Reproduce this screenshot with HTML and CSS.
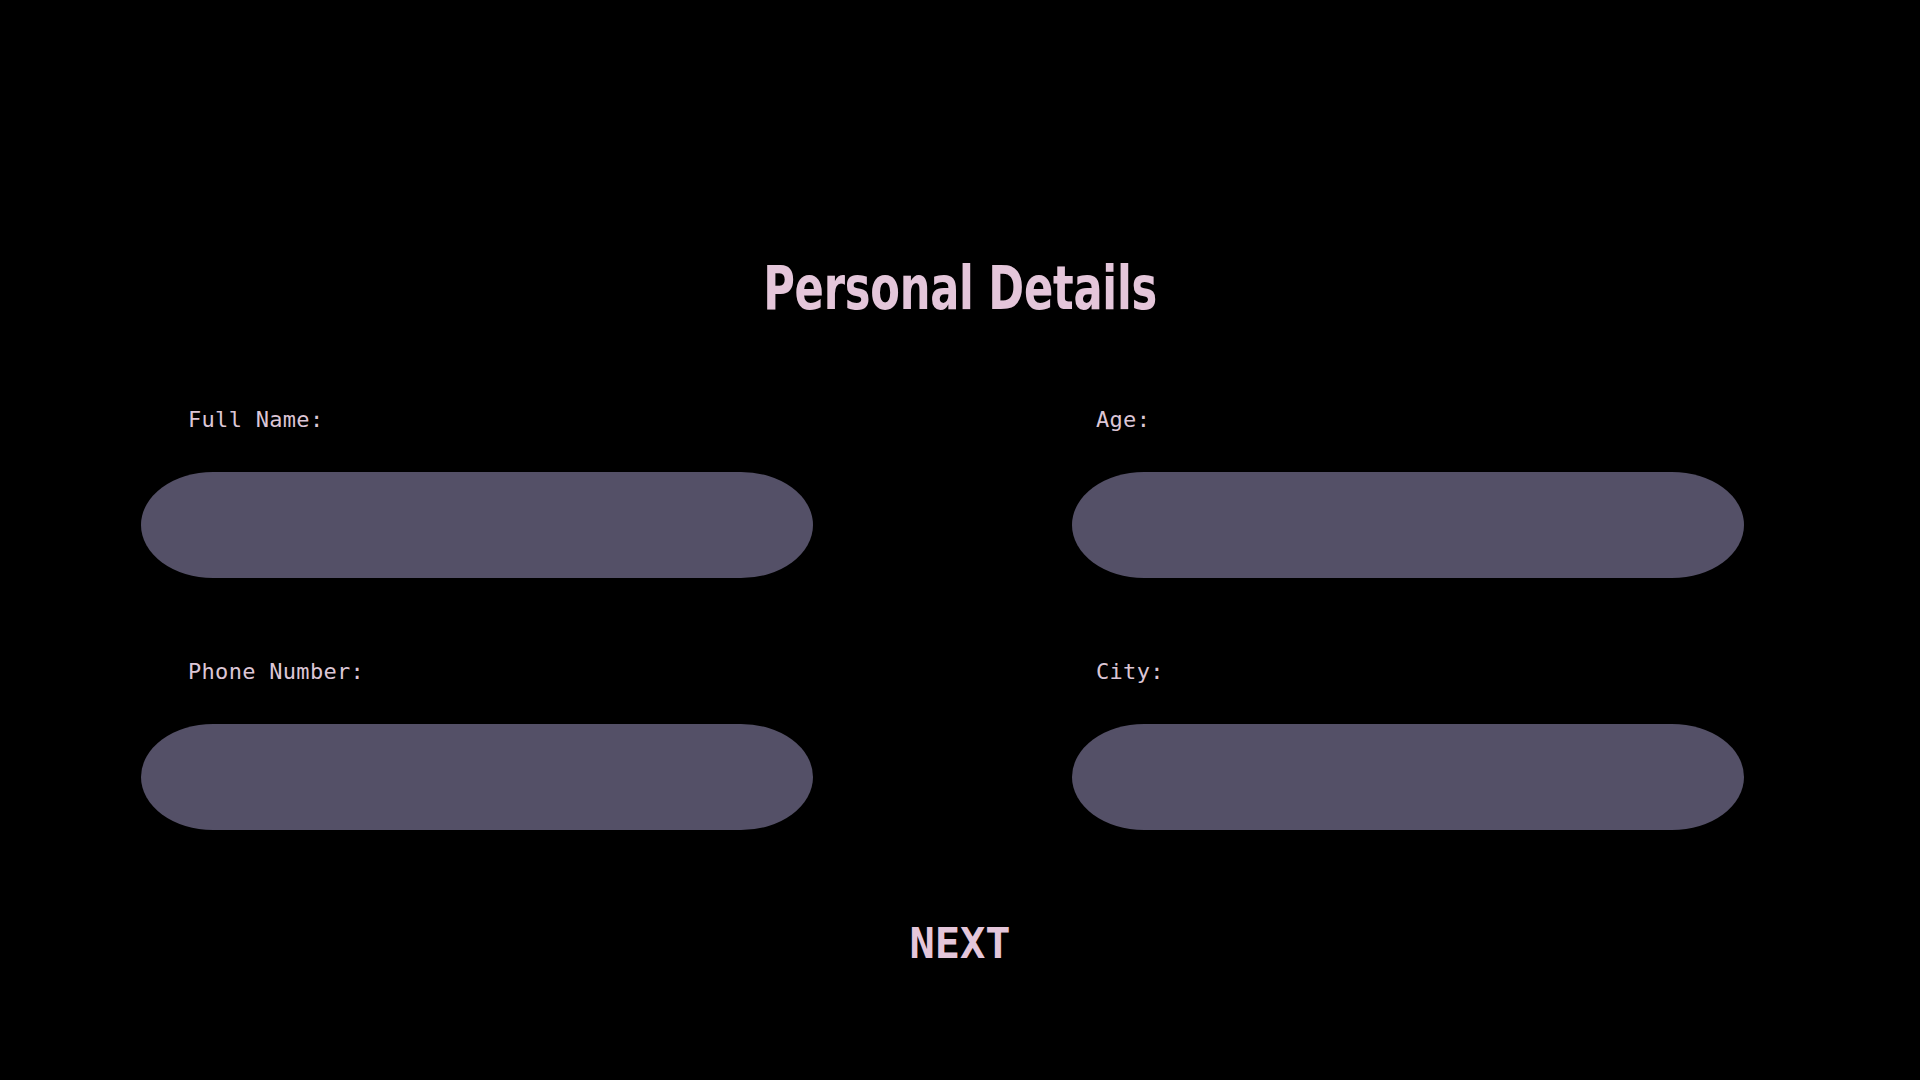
FILE: index.html
```html
<!DOCTYPE html>
<html lang="en">
<head>
  <meta charset="UTF-8">
  <title>Personal Details</title>
  <link rel="stylesheet" href="styles.css">
</head>
<body>

<div class="page">
  <h1 class="title"><span>Personal Details</span></h1>

  <form class="fields">
    <div class="field left">
      <label for="fullName">Full Name:</label>
      <input type="text" id="fullName">
    </div>
    <div class="field right">
      <label for="age">Age:</label>
      <input type="text" id="age">
    </div>
    <div class="field left">
      <label for="phone">Phone Number:</label>
      <input type="text" id="phone">
    </div>
    <div class="field right">
      <label for="city">City:</label>
      <input type="text" id="city">
    </div>
  </form>

  <button class="next" type="button">NEXT</button>
</div>

</body>
</html>
```

FILE: styles.css
```css
* { box-sizing: border-box; }
html, body { margin: 0; padding: 0; background: #000; }
body { width: 1920px; height: 1080px; overflow: hidden; }
.page { display: flex; flex-direction: column; padding-top: 258px; }
.title {
  margin: 0;
  text-align: center;
  font-family: "Liberation Sans Narrow", "DejaVu Sans Condensed", "Liberation Sans", sans-serif;
  font-weight: bold;
  font-size: 60px;
  line-height: 60px;
  color: #e4c6da;
}
.title span { display: inline-block; transform: scaleX(0.8); letter-spacing: -0.3px; }
.fields {
  display: grid;
  grid-template-columns: 672px 672px;
  column-gap: 259px;
  row-gap: 81px;
  margin: 89px 0 0 141px;
}
.field { display: flex; flex-direction: column; gap: 41px; }
.field label {
  margin-top: 2px;
  font-family: "DejaVu Sans Mono", "Liberation Mono", monospace;
  font-size: 22px;
  line-height: 22px;
  letter-spacing: 0.3px;
  color: #dcc6d6;
}
.field.left label { padding-left: 47px; }
.field.right label { padding-left: 24px; }
.field input {
  height: 106px;
  border: none;
  outline: none;
  background: #545067;
  border-radius: 72px / 53px;
  padding: 0 40px;
  font-family: "DejaVu Sans Mono", monospace;
  font-size: 22px;
  color: #e4c6da;
}
.next {
  align-self: center;
  margin-top: 93px;
  padding: 0;
  border: none;
  background: none;
  cursor: pointer;
  font-family: "DejaVu Sans Mono", "Liberation Mono", monospace;
  font-weight: bold;
  font-size: 42px;
  line-height: 42px;
  color: #e4c6da;
}
```
